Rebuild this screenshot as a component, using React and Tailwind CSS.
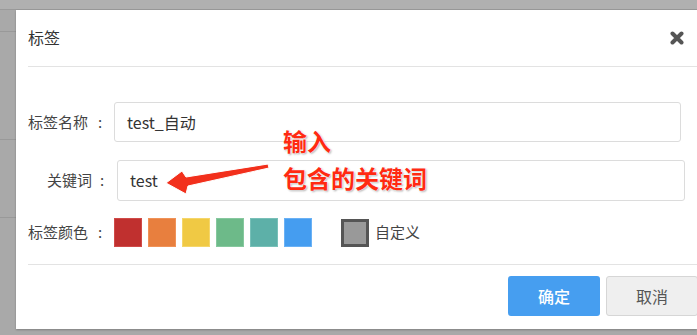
const swatches = ["#c0302f", "#e87f3e", "#f0c944", "#6dba89", "#5db0a8", "#459df0"]
const borders = ["#d04a48", "#f09258", "#f5d66a", "#86c89e", "#78c0b8", "#6ab1f5"]

function Label({ text, className, colon = "w-[24px]" }) {
  return (
    <span className={`flex items-center shrink-0 text-[15px] text-[#444] ${className}`}>
      {text}
      <span className={`${colon} text-center`}>:</span>
    </span>
  )
}

export default function App() {
  return (
    <div className="relative w-[697px] h-[335px] overflow-hidden bg-[#a9a9a9] font-['Noto_Sans_CJK_SC',sans-serif] text-[#333]">
      {/* page behind the dialog */}
      <div className="h-[10px] bg-[#b0b0b0] border-b border-[#9a9a9a]" />
      <div className="w-[16px] mt-[21px] border-t border-[#999]" />
      <div className="w-[16px] mt-[107px] border-t border-[#999]" />
      <div className="w-[16px] mt-[77px] border-t border-[#999]" />

      {/* dialog */}
      <div className="absolute left-[16px] top-[10px] w-[681px] h-[319px] bg-white shadow-[0_1px_2px_rgba(0,0,0,0.25)]">
        <div className="ml-[12px] h-[57px] flex items-center justify-between border-b border-[#e3e3e3] pr-[13px]">
          <span className="text-[16px] text-[#333] -mt-[2px]">标签</span>
          <svg width="14" height="14" viewBox="0 0 14 14" className="-mt-[1px]">
            <path d="M2.5 2.5 L11.5 11.5 M11.5 2.5 L2.5 11.5" stroke="#555" strokeWidth="4" strokeLinecap="round" />
          </svg>
        </div>

        <div className="pl-[12px] pt-[35px]">
          <div className="flex items-center h-[40px]">
            <Label text="标签名称" className="w-[86px]" />
            <div className="w-[567px] h-[40px] border border-[#dcdcdc] rounded-[3px] flex items-center pl-[12px] text-[16px]">
              test_自动
            </div>
          </div>
          <div className="flex items-center h-[40px] mt-[18px]">
            <Label text="关键词" colon="w-[20px]" className="w-[89px] justify-end pr-[5px]" />
            <div className="w-[568px] h-[41px] border border-[#dcdcdc] rounded-[3px] flex items-center pl-[12px] text-[16px]">
              test
            </div>
          </div>
          <div className="flex items-center h-[29px] mt-[18px]">
            <Label text="标签颜色" className="w-[86px]" />
            <div className="flex gap-[6px]">
              {swatches.map((c, i) => (
                <div key={i} className="w-[28px] h-[29px] border" style={{ backgroundColor: c, borderColor: borders[i] }} />
              ))}
            </div>
            <div className="ml-[29px] w-[28px] h-[28px] border-[3px] border-[#555] bg-[#999]" />
            <span className="ml-[6px] text-[15px] text-[#444]">自定义</span>
          </div>
        </div>

        <div className="ml-[12px] mt-[17px] border-t border-[#e3e3e3]" />
        <div className="flex gap-[6px] pl-[492px] pt-[11px]">
          <button className="w-[92px] h-[40px] shrink-0 rounded-[3px] bg-[#469ef0] text-white text-[16px] font-medium">确定</button>
          <button className="w-[92px] h-[40px] shrink-0 rounded-[3px] bg-[#efefef] border border-[#d6d6d6] text-[#555] text-[16px]">取消</button>
        </div>
      </div>

      {/* annotation */}
      <svg className="absolute left-[160px] top-[160px]" width="112" height="40" viewBox="160 160 112 40">
        <polygon
          points="166,183 182,171 186,177 268,164 269,168 188,186 186,194"
          fill="#f2301c"
          stroke="#ffffff"
          strokeWidth="1"
          strokeLinejoin="round"
        />
      </svg>
      <div className="absolute left-[283px] top-[122px] text-[24px] leading-[37px] font-bold text-[#ff2a12] [text-shadow:0_0_2px_#fff,0_0_2px_#fff,1px_1px_2px_#999]">
        <div>输入</div>
        <div>包含的关键词</div>
      </div>
    </div>
  )
}
